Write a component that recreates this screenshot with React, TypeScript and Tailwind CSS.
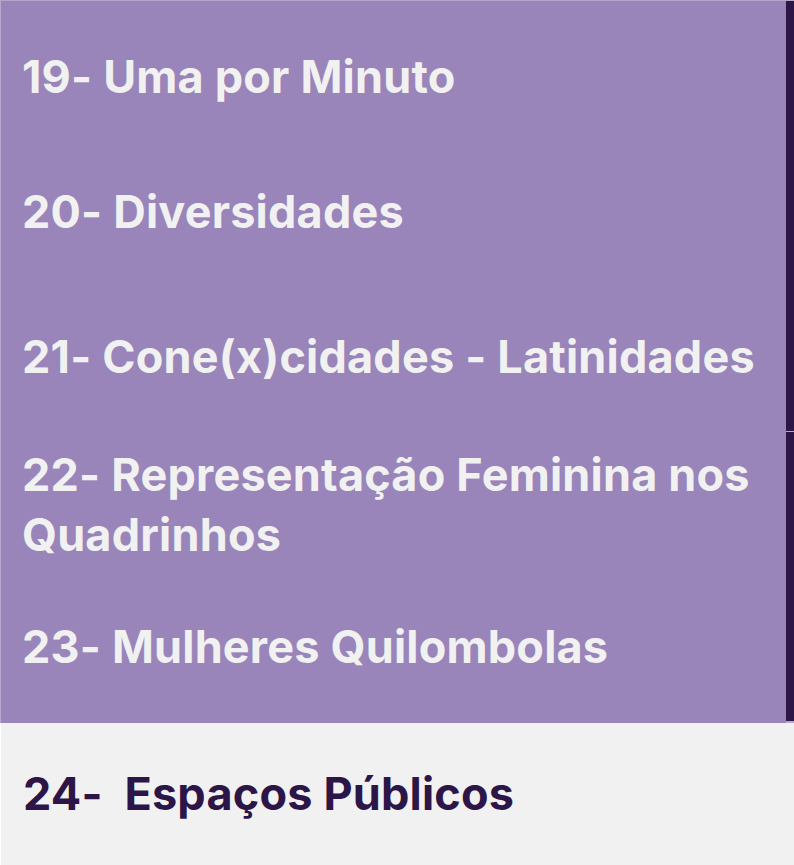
import React from "react";

const items = [
  { text: "19- Uma por Minuto", cls: "h-[144px] pt-[8px]" },
  { text: "20- Diversidades", cls: "h-[144px] pb-[10px]" },
  { text: "21- Cone(x)cidades - Latinidades", cls: "h-[143px] pb-[8px]" },
  { text: "22- Representação Feminina nos Quadrinhos", cls: "h-[146px]" },
  { text: "23- Mulheres Quilombolas", cls: "h-[145px] pb-[8px]" },
];

export default function App() {
  return (
    <div
      className="w-[794px] h-[865px] bg-[#f1f1f1] overflow-hidden"
      style={{ fontFamily: "Inter, 'Noto Sans', sans-serif" }}
    >
      <div className="flex w-[794px] border-t border-[#b3a6c9]">
        <div className="flex-1 bg-[#9985b9] border-l border-[#b5a8cb]">
          {items.map((it, i) => (
            <div
              key={i}
              className={`flex items-center pl-[21px] pr-[8px] ${it.cls}`}
            >
              <span className="text-[#f1f1f1] font-bold text-[45px] leading-[60px] tracking-[0.2px]">
                {it.text}
              </span>
            </div>
          ))}
        </div>
        <div className="w-[8px] shrink-0 flex flex-col">
          <div className="h-[430px] bg-[#2c1648]" />
          <div className="h-[1px] bg-[#b5a8cb]" />
          <div className="flex-1 bg-[#2c1648] border-b-2 border-[#b5a8cb]" />
        </div>
      </div>
      <div className="flex items-center h-[142px] pl-[22px] border-l border-white">
        <span className="text-[#2c1648] font-bold text-[45px] leading-[60px] tracking-[0.2px] whitespace-pre">
          {"24-  Espaços Públicos"}
        </span>
      </div>
    </div>
  );
}
